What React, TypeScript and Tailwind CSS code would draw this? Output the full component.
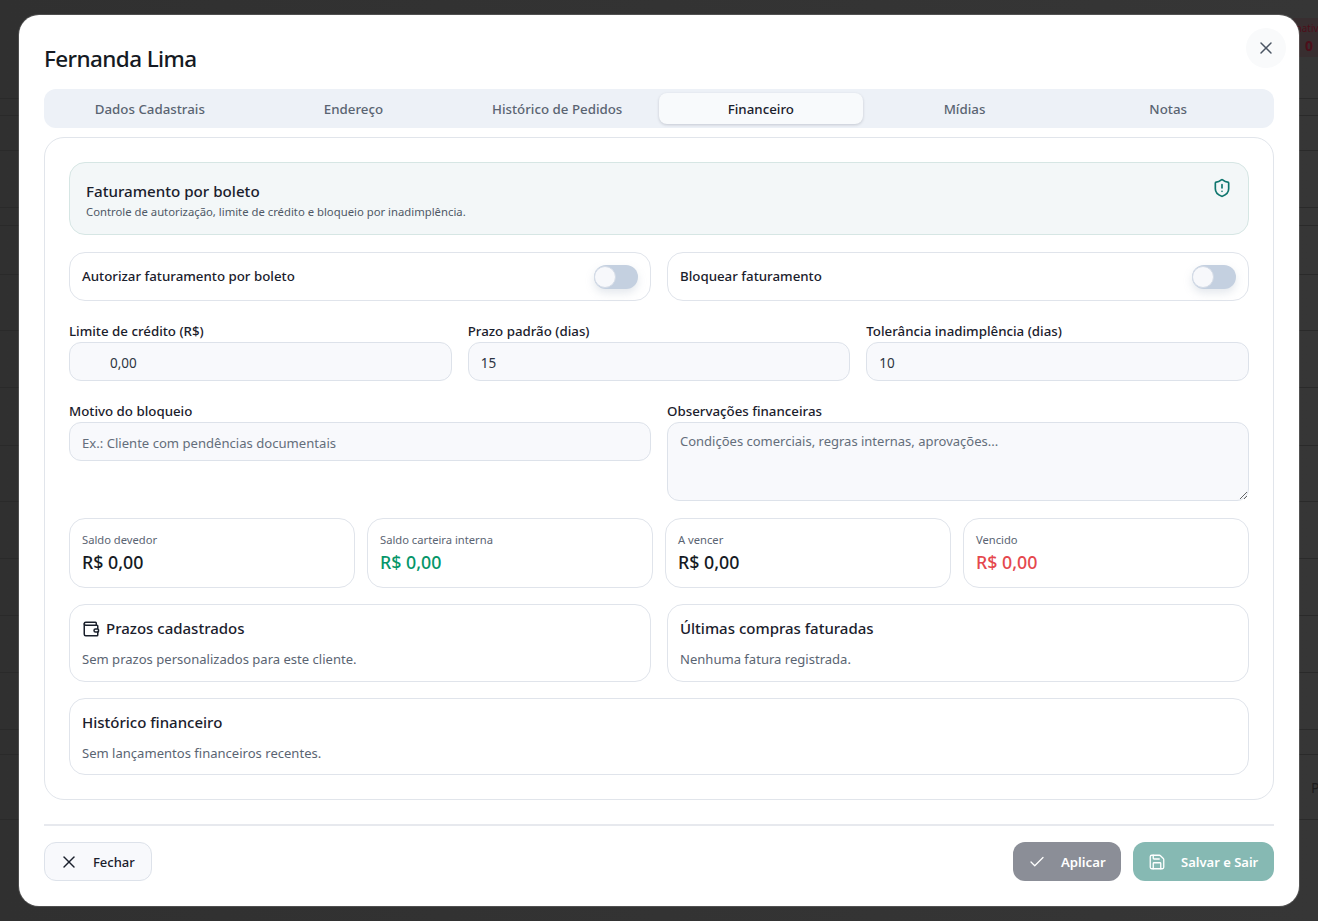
import { Check, Save, ShieldAlert, Wallet, X } from 'lucide-react';

const rowHeights = [99, 17, 35, 57, 18, 49, 56, 57, 58, 56, 57, 57, 57, 57, 25, 65, 102];
const tabs = ['Dados Cadastrais', 'Endereço', 'Histórico de Pedidos', 'Financeiro', 'Mídias', 'Notas'];

function Toggle() {
  return (
    <div className="flex h-[24px] w-[44px] items-center rounded-full bg-[#c4d0e0] shadow-[0_4px_8px_rgba(148,163,184,0.25)]">
      <div className="h-[22px] w-[22px] rounded-full border border-[#d4dbe6] bg-[#f7f8fb]" />
    </div>
  );
}

function ToggleCard({ label }: { label: string }) {
  return (
    <div className="flex h-[49px] items-center justify-between rounded-[16px] border border-[#e0e4eb] bg-white pl-3 pr-3">
      <span className="pt-[1px] text-[13.3px] font-medium text-[#1a202c]">{label}</span>
      <Toggle />
    </div>
  );
}

function Field({ label, value, indent }: { label: string; value?: string; indent?: boolean }) {
  return (
    <div className="flex flex-col">
      <label className="mb-[3px] h-[17px] text-[13.3px] leading-[19px] font-medium text-[#1a202c]">{label}</label>
      <input
        readOnly
        value={value}
        className={`h-[39px] rounded-[12px] border border-[#dde2ea] bg-[#f8f9fc] pt-[3px] pr-3 text-[13.5px] text-[#2d3542] outline-none ${indent ? 'pl-[40px]' : 'pl-3'}`}
      />
    </div>
  );
}

function Stat({ label, color }: { label: string; color: string }) {
  return (
    <div className="flex h-[70px] flex-col rounded-[16px] border border-[#e0e4eb] bg-white px-3 pt-[13px]">
      <span className="text-[11.2px] leading-[15px] text-[#5a6472]">{label}</span>
      <span className={`mt-[3px] text-[17.8px] leading-[24px] font-medium ${color}`}>R$ 0,00</span>
    </div>
  );
}

function InfoCard({ title, text, icon }: { title: string; text: string; icon?: boolean }) {
  return (
    <div className="flex h-[78px] flex-col rounded-[16px] border border-[#e0e4eb] bg-white px-3 pt-[12px]">
      <div className="flex h-[24px] items-center gap-[6px]">
        {icon && <Wallet className="h-[18px] w-[18px] text-[#1a202c]" strokeWidth={2} />}
        <span className="text-[15px] font-medium text-[#1a202c]">{title}</span>
      </div>
      <p className="mt-[9px] text-[13.05px] leading-[18px] text-[#5a6472]">{text}</p>
    </div>
  );
}

export default function App() {
  return (
    <div className="relative h-[921px] w-[1318px] overflow-hidden bg-linear-to-r from-[#303030] to-[#363636] font-['Noto_Sans',sans-serif]">
      {/* tabela escurecida atrás do modal */}
      <div className="flex flex-col">
        {rowHeights.map((h, i) => (
          <div key={i} className="border-b border-[#2a2a2a]" style={{ height: h }}>
            {i === 0 && (
              <div className="mt-[18px] ml-auto flex h-[39px] w-[25px] flex-col overflow-hidden bg-[#382e30] pt-[1px] text-[#4c0f1a]">
                <span className="text-[10px] leading-[18px] whitespace-nowrap">inativos</span>
                <span className="ml-[12px] text-[14px] leading-[18px] font-bold">0</span>
              </div>
            )}
            {i === 15 && <div className="mt-[22px] ml-[1311px] text-[14px] text-[#1c1c1c]">P</div>}
          </div>
        ))}
      </div>

      <div className="absolute top-[15px] left-[19px] flex h-[891px] w-[1280px] flex-col rounded-[20px] bg-white px-[25px] shadow-[0_0_0_1px_rgba(255,255,255,0.15)]">
        <div className="flex h-[74px] items-start justify-between">
          <h2 className="mt-[26px] text-[22.5px] leading-[36px] font-medium tracking-[-0.6px] text-[#151a23]">Fernanda Lima</h2>
          <button className="mt-[13px] -mr-[12px] flex h-[40px] w-[40px] items-center justify-center rounded-full bg-[#f9fafb] text-[#4b5563]">
            <X className="h-[20px] w-[20px]" strokeWidth={1.75} />
          </button>
        </div>

        <div className="grid h-[39px] grid-cols-6 rounded-[12px] bg-[#edf1f7] px-[4px] py-[4px]">
          {tabs.map((t) => (
            <div
              key={t}
              className={
                t === 'Financeiro'
                  ? 'flex items-center justify-center rounded-[8px] bg-[#f8fafc] pt-[2px] text-[13.3px] font-medium text-[#1a202c] shadow-[0_1px_3px_rgba(15,23,42,0.18)]'
                  : 'flex items-center justify-center pt-[2px] text-[13.3px] font-medium text-[#5a6472]'
              }
            >
              {t}
            </div>
          ))}
        </div>

        <div className="mt-[9px] flex h-[663px] flex-col gap-[16px] rounded-[20px] border border-[#e1e5eb] bg-white p-[24px]">
          <div className="flex h-[74px] items-start justify-between rounded-[16px] border border-[#d6e6e4] bg-[#f3f7f8] pr-[16px] pl-[16px]">
            <div className="pt-[17px]">
              <div className="text-[15.15px] leading-[22px] font-medium text-[#1a202c]">Faturamento por boleto</div>
              <div className="mt-[1px] text-[11.3px] leading-[17px] text-[#4f5966]">
                Controle de autorização, limite de crédito e bloqueio por inadimplência.
              </div>
            </div>
            <ShieldAlert className="mt-[15px] h-[20px] w-[20px] text-[#0f766e]" strokeWidth={2} />
          </div>

          <div className="mt-[1px] grid grid-cols-2 gap-[16px]">
            <ToggleCard label="Autorizar faturamento por boleto" />
            <ToggleCard label="Bloquear faturamento" />
          </div>

          <div className="mt-[5px] grid grid-cols-3 gap-[16px]">
            <Field label="Limite de crédito (R$)" value="0,00" indent />
            <Field label="Prazo padrão (dias)" value="15" />
            <Field label="Tolerância inadimplência (dias)" value="10" />
          </div>

          <div className="mt-[5px] grid h-[100px] grid-cols-2 gap-[16px]">
            <div className="flex flex-col">
              <label className="mb-[3px] h-[17px] text-[13.3px] leading-[19px] font-medium text-[#1a202c]">Motivo do bloqueio</label>
              <input
                readOnly
                placeholder="Ex.: Cliente com pendências documentais"
                className="h-[39px] rounded-[12px] border border-[#dde2ea] bg-[#f8f9fc] px-3 pt-[3px] text-[13.1px] outline-none placeholder:text-[#646e7b]"
              />
            </div>
            <div className="flex flex-col">
              <label className="mb-[3px] h-[17px] text-[13.3px] leading-[19px] font-medium text-[#1a202c]">Observações financeiras</label>
              <textarea
                readOnly
                placeholder="Condições comerciais, regras internas, aprovações..."
                className="h-[79px] rounded-[12px] border border-[#dde2ea] bg-[#f8f9fc] px-3 py-[8px] text-[13px] leading-[20px] outline-none placeholder:text-[#646e7b]"
              />
            </div>
          </div>

          <div className="grid grid-cols-4 gap-[12px]">
            <Stat label="Saldo devedor" color="text-[#151a23]" />
            <Stat label="Saldo carteira interna" color="text-[#059669]" />
            <Stat label="A vencer" color="text-[#151a23]" />
            <Stat label="Vencido" color="text-[#e5484d]" />
          </div>

          <div className="grid grid-cols-2 gap-[16px]">
            <InfoCard icon title="Prazos cadastrados" text="Sem prazos personalizados para este cliente." />
            <InfoCard title="Últimas compras faturadas" text="Nenhuma fatura registrada." />
          </div>

          <InfoCard title="Histórico financeiro" text="Sem lançamentos financeiros recentes." />
        </div>

        <div className="mt-[24px] flex items-center justify-between border-t-2 border-[#e7e9ee] pt-[16px]">
          <button className="flex h-[39px] w-[108px] items-center gap-[14px] rounded-[12px] border border-[#dde2ea] bg-[#f8f9fc] pl-[14px] text-[13px] font-medium text-[#1a202c]">
            <X className="h-[20px] w-[20px]" strokeWidth={1.75} />
            <span className="pt-[2px]">Fechar</span>
          </button>
          <div className="flex gap-[12px]">
            <button className="flex h-[39px] w-[108px] items-center gap-[15px] rounded-[12px] bg-[#8b8e97] pl-[15px] text-[13.2px] font-semibold text-white">
              <Check className="h-[18px] w-[18px]" strokeWidth={1.75} />
              <span className="pt-[2px]">Aplicar</span>
            </button>
            <button className="flex h-[39px] w-[141px] items-center gap-[15px] rounded-[12px] bg-[#86b9b3] pl-[15px] text-[13px] font-semibold text-white">
              <Save className="h-[18px] w-[18px]" strokeWidth={1.75} />
              <span className="pt-[2px]">Salvar e Sair</span>
            </button>
          </div>
        </div>
      </div>
    </div>
  );
}
